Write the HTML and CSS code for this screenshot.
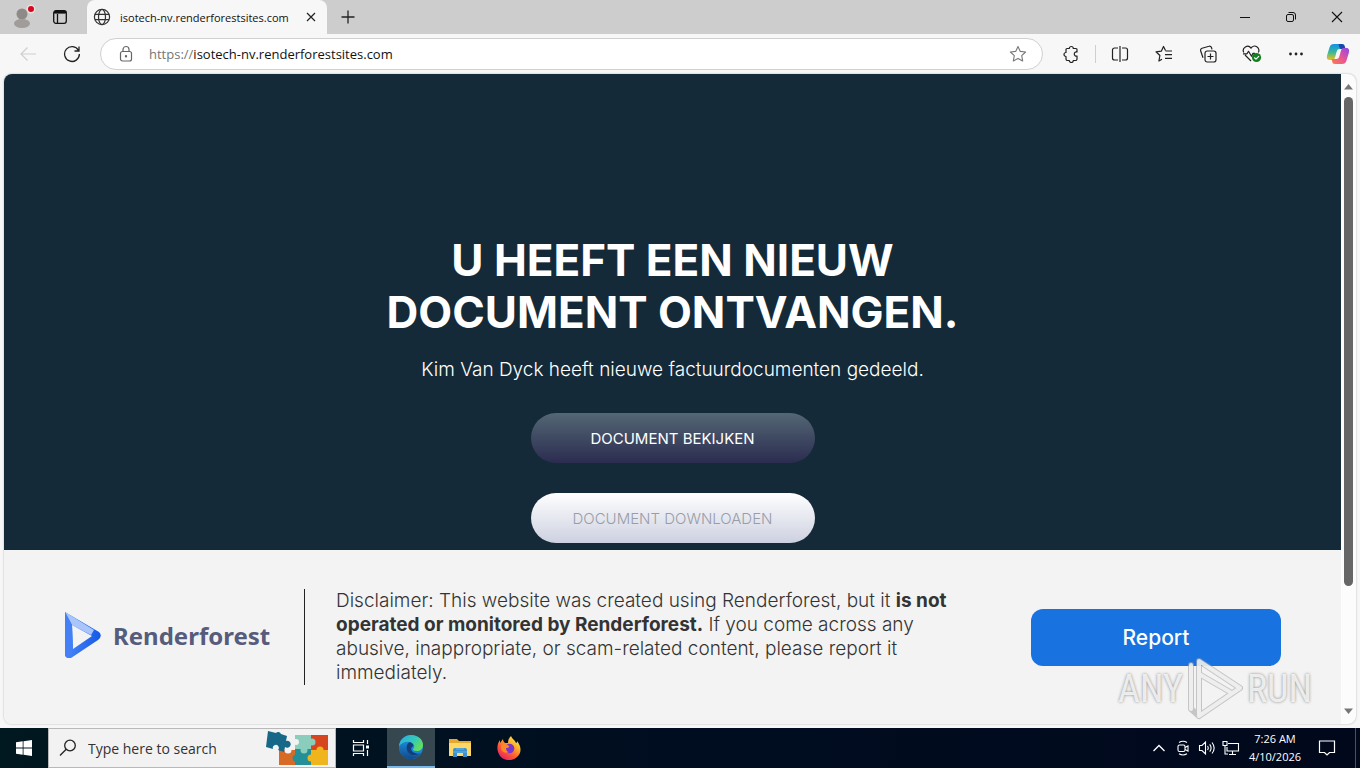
FILE: index.html
```html
<!DOCTYPE html>
<html lang="nl">
<head>
<meta charset="utf-8">
<title>isotech-nv.renderforestsites.com</title>
<link rel="stylesheet" href="styles.css">
</head>
<body>
<header class="tabstrip">
  <button class="tab-tool profile" aria-label="Profile">
    <svg width="30" height="30" viewBox="0 0 30 30"><circle cx="15" cy="12" r="5.500" fill="#8e8a87"/><ellipse cx="15" cy="21.500" rx="8" ry="4.500" fill="#a09c99"/><circle cx="24" cy="7" r="4.500" fill="#e6e0e0"/><circle cx="24" cy="7" r="3" fill="#d8061f"/></svg>
  </button>
  <button class="tab-tool" aria-label="Tab actions">
    <svg width="16" height="16" viewBox="0 0 16 16" fill="none" stroke="#111" stroke-width="1.300"><rect x="1.700" y="1.700" width="12.600" height="12.600" rx="2.200"/><path d="M2 3.500h12M5.500 5v9" /><path d="M2.500 3.200h11" stroke-width="2.600"/></svg>
  </button>
  <div class="tab">
    <svg width="18" height="18" viewBox="0 0 18 18" fill="none" stroke="#333" stroke-width="1.200"><circle cx="9" cy="9" r="7.600"/><ellipse cx="9" cy="9" rx="3.500" ry="7.600"/><path d="M2 6.300h14M2 11.700h14"/></svg>
    <span class="tab-title">isotech-nv.renderforestsites.com</span>
    <button class="tab-close" aria-label="Close tab"><svg width="12" height="12" viewBox="0 0 12 12" stroke="#222" stroke-width="1.200"><path d="M2 2l8 8M10 2l-8 8"/></svg></button>
  </div>
  <button class="new-tab" aria-label="New tab"><svg width="16" height="16" viewBox="0 0 16 16" stroke="#222" stroke-width="1.300"><path d="M8 1.500v13M1.500 8h13"/></svg></button>
  <div class="window-controls">
    <button aria-label="Minimize"><svg width="12" height="12" viewBox="0 0 12 12" stroke="#111"><path d="M1 6.500h10"/></svg></button>
    <button aria-label="Restore"><svg width="12" height="12" viewBox="0 0 12 12" fill="none" stroke="#111"><rect x="1.500" y="3.500" width="7" height="7" rx="1.500"/><path d="M3.500 1.500h4.500a2.500 2.500 0 0 1 2.500 2.500v4.500"/></svg></button>
    <button aria-label="Close"><svg width="12" height="12" viewBox="0 0 12 12" stroke="#111" stroke-width="1.100"><path d="M1 1l10 10M11 1L1 11"/></svg></button>
  </div>
</header>

<nav class="toolbar">
  <button class="tool" aria-label="Back"><svg width="18" height="18" viewBox="0 0 18 18" fill="none" stroke="#cfcfcf" stroke-width="1.200"><path d="M17 9H2M8.500 2.500L2 9l6.500 6.500"/></svg></button>
  <button class="tool" aria-label="Refresh"><svg width="18" height="18" viewBox="0 0 18 18" fill="none" stroke="#222" stroke-width="1.300"><path d="M15.500 5.500A7.400 7.400 0 1 0 16.400 9M16 1.500v4.500h-4.500"/></svg></button>
  <div class="address">
    <svg width="16" height="18" viewBox="0 0 16 18" fill="none" stroke="#666" stroke-width="1.200"><rect x="2.500" y="6.500" width="11" height="9.500" rx="2"/><path d="M5 6.500V4.500a3 3 0 0 1 6 0v2"/><circle cx="8" cy="11.300" r=".6" fill="#666"/></svg>
    <label class="scheme" for="url">https://</label>
    <input id="url" type="text" value="isotech-nv.renderforestsites.com">
    <button class="star" aria-label="Add to favorites"><svg width="18" height="18" viewBox="0 0 18 18" fill="none" stroke="#777" stroke-width="1.100" stroke-linejoin="round"><path d="M9 1.500l2.300 4.900 5.300.6-3.900 3.700 1 5.300L9 13.400 4.300 16l1-5.300L1.400 7l5.300-.6z"/></svg></button>
  </div>
  <button class="tool" aria-label="Extensions"><svg width="18" height="18" viewBox="0 0 18 18" fill="none" stroke="#222" stroke-width="1.200" stroke-linejoin="round"><path d="M5 3.500h2.300a2 2 0 1 1 4 0H14a1 1 0 0 1 1 1V7a2.100 2.100 0 1 0 0 4v3a1.500 1.500 0 0 1-1.500 1.500h-2.200a2 2 0 0 1-4 0H5.500A1.500 1.500 0 0 1 4 14v-2.500a2 2 0 0 1 0-4v-3a1 1 0 0 1 1-1z"/></svg></button>
  <span class="divider"></span>
  <button class="tool" aria-label="Split screen"><svg width="18" height="18" viewBox="0 0 18 18" fill="none" stroke="#222" stroke-width="1.200"><path d="M7 3H3.500A2 2 0 0 0 1.500 5v8a2 2 0 0 0 2 2H7M11 3h3.500a2 2 0 0 1 2 2v8a2 2 0 0 1-2 2H11M9 1v16"/></svg></button>
  <button class="tool" aria-label="Favorites"><svg width="18" height="18" viewBox="0 0 18 18" fill="none" stroke="#222" stroke-width="1.200" stroke-linejoin="round"><path d="M10.500 5.500L8.500 1.500 6.300 6.200 1 6.800l3.900 3.700-1 5.500L7 14.200M10.500 6H17M10 9.700h7M10 13.400h7"/></svg></button>
  <button class="tool" aria-label="Collections"><svg width="18" height="18" viewBox="0 0 18 18" fill="none" stroke="#222" stroke-width="1.200"><rect x="6" y="6" width="11" height="11" rx="2.200"/><path d="M11.500 8.500v6M8.500 11.500h6M4 12.800L1.700 6a2.200 2.200 0 0 1 1.400-2.800L10 1.300a2 2 0 0 1 2.600 1.500l.4 1.500"/></svg></button>
  <button class="tool" aria-label="Browser essentials"><svg width="20" height="18" viewBox="0 0 20 18" fill="none" stroke="#222" stroke-width="1.200" stroke-linejoin="round"><path d="M1.800 7.500A4.200 4.200 0 0 1 9 3.200a4.200 4.200 0 0 1 7.300 4.300M3 10l6 6M1 8.800h4l1.500-2.500 3 5 1.500-3h2"/><circle cx="14.500" cy="12.500" r="4.600" fill="#12801f" stroke="none"/><path d="M12.300 12.500l1.700 1.700 3-3" stroke="#fff"/></svg></button>
  <button class="tool" aria-label="Settings and more"><svg width="16" height="16" viewBox="0 0 16 16" fill="#222"><circle cx="2.500" cy="8" r="1.400"/><circle cx="8" cy="8" r="1.400"/><circle cx="13.500" cy="8" r="1.400"/></svg></button>
  <button class="tool copilot" aria-label="Copilot"><svg width="24" height="24" viewBox="0 0 24 24">
    <defs><linearGradient id="ca" x1="0" y1="0" x2="0" y2="1"><stop offset="0" stop-color="#168fe5"/><stop offset=".5" stop-color="#35b7a0"/><stop offset="1" stop-color="#f2c312"/></linearGradient><linearGradient id="cb" x1="1" y1="0" x2="0" y2="1"><stop offset="0" stop-color="#8c48ed"/><stop offset=".5" stop-color="#e65594"/><stop offset="1" stop-color="#ff7c4b"/></linearGradient></defs>
    <path d="M8 2h7c2 0 2.500 1 3 3l.5 2H14c-2 0-2.800.8-3.300 2.500L9 15.500C8.500 17 8 18 6 18H4c-3 0-3.600-2-2.800-5L3.500 5.500C4.200 3 5.500 2 8 2z" fill="url(#ca)"/>
    <path d="M12.500 2H16c2 0 2.500 1 3 3l.5 2H15c-1 0-1.500-1-2.500-5z" fill="#1748ae"/>
    <path d="M16 22H9c-2 0-2.500-1-3-3l-.5-2H10c2 0 2.800-.8 3.300-2.500L15 8.500C15.500 7 16 6 18 6h2c3 0 3.600 2 2.800 5l-2.300 7.500C19.800 21 18.500 22 16 22z" fill="url(#cb)"/></svg></button>
</nav>

<div class="viewport">
  <div class="site">
    <main class="hero">
      <h1>U HEEFT EEN NIEUW<br>DOCUMENT ONTVANGEN.</h1>
      <p>Kim Van Dyck heeft nieuwe factuurdocumenten gedeeld.</p>
      <button class="pill pill-dark">DOCUMENT BEKIJKEN</button>
      <button class="pill pill-light">DOCUMENT DOWNLOADEN</button>
    </main>
    <footer class="disclaimer">
      <div class="brand">
        <svg width="38" height="48" viewBox="0 0 38 48"><defs><linearGradient id="rf" x1="0" y1="0" x2="1" y2="0"><stop offset="0" stop-color="#4b86f7"/><stop offset="1" stop-color="#1559e6"/></linearGradient></defs><path d="M1 1v42q0 4 4 4h2L34 29q5-4 1-8z" fill="url(#rf)"/><path d="M1 1l29 18-3 5L8 14z" fill="#a9c5fb"/><path d="M8 14l20 11L9 38z" fill="#f3f3f3"/><path d="M1 1l7 13 1 24-4 9q-4 0-4-4z" fill="#4380f5"/></svg>
        <span>Renderforest</span>
      </div>
      <p class="notice">Disclaimer: This website was created using Renderforest, but it <strong>is not operated or monitored by Renderforest.</strong> If you come across any abusive, inappropriate, or scam-related content, please report it immediately.</p>
      <button class="report">Report</button>
    </footer>
  </div>
  <div class="scrollbar">
    <svg width="9" height="6" viewBox="0 0 9 6"><path d="M0 5.500h9L4.500 0z" fill="#777"/></svg>
    <div class="track"><div class="thumb"></div></div>
    <svg width="9" height="6" viewBox="0 0 9 6"><path d="M0 .5h9L4.500 6z" fill="#777"/></svg>
  </div>
</div>

<div class="watermark">
  <span>ANY</span>
  <svg width="58" height="64" viewBox="0 0 58 64" fill="none" stroke-linejoin="round" stroke-linecap="round"><path d="M13 4L54 31 13 59zM13 4v55M13 17l31 18M5 8v44l8 7" stroke="#a7a7a7" stroke-opacity=".6" stroke-width="6"/><path d="M13 4L54 31 13 59zM13 17l31 18M5 8v44" stroke="#f8f8f8" stroke-opacity=".8" stroke-width="4"/></svg>
  <span>RUN</span>
</div>

<footer class="taskbar">
  <button class="start" aria-label="Start"><svg width="16" height="16" viewBox="0 0 16 16" fill="#fff"><path d="M0 2.300L6.700 1.300v6.300H0zM7.500 1.200L16 0v7.600H7.500zM0 8.400h6.700v6.300L0 13.700zM7.500 8.400H16V16l-8.500-1.200z"/></svg></button>
  <div class="search">
    <svg width="18" height="18" viewBox="0 0 18 18" fill="none" stroke="#222" stroke-width="1.300"><circle cx="11" cy="6.500" r="5.300"/><path d="M7.200 10.300L1 16.500"/></svg>
    <input type="text" aria-label="Search" placeholder="Type here to search">
    <svg width="64" height="36" viewBox="0 0 64 36">
      <path d="M14 20h18v15H14z" fill="#d86a28"/><path d="M30 5h18v15H30z" fill="#8acdbd"/><path d="M46 5h17v16H46z" fill="#d6451d"/><path d="M30 19h18v16H30z" fill="#238f96"/><path d="M46 20h17v15H46z" fill="#f0b51d"/>
      <circle cx="47" cy="12" r="3.500" fill="#8acdbd"/><circle cx="39" cy="20" r="3.500" fill="#8acdbd"/><circle cx="55" cy="20" r="3.500" fill="#f0b51d"/><circle cx="46" cy="28" r="3.500" fill="#f0b51d"/><circle cx="31" cy="28" r="3.500" fill="#238f96"/><circle cx="23" cy="20" r="3.500" fill="#f2f2f2"/><circle cx="31" cy="12" r="3" fill="#f2f2f2"/>
      <path d="M3 1l8 2a3 3 0 0 1 5 1l6 2-1 5a3.500 3.500 0 1 1-1 6l-1 5-6-2a3 3 0 1 0-5-1l-7-2z" fill="#176888"/></svg>
  </div>
  <button class="app" aria-label="Task view"><svg width="18" height="16" viewBox="0 0 18 16" fill="none" stroke="#fff" stroke-width="1.200"><path d="M1.500 0v2.500h10V0M1.500 16v-2.500h10V16M1.500 5h10v6h-10zM15.500 0v4M15.500 10v6"/><path d="M14 5.500h3v3h-3z" fill="#fff" stroke="none"/></svg></button>
  <button class="app active" aria-label="Microsoft Edge"><svg width="24" height="24" viewBox="0 0 24 24"><defs><linearGradient id="ea" x1="0" y1="0" x2="1" y2=".6"><stop offset="0" stop-color="#29a9e6"/><stop offset=".6" stop-color="#35c9b8"/><stop offset="1" stop-color="#65de58"/></linearGradient><linearGradient id="eb" x1="0" y1="0" x2="0" y2="1"><stop offset="0" stop-color="#1c86d3"/><stop offset="1" stop-color="#114a8b"/></linearGradient></defs><circle cx="12" cy="12" r="12" fill="#1b85d6"/><path d="M0 11C1 4 6 0 12 0c8 0 12 5.500 12 10 0 4-3 6-6 6-3 0-4.500-1-4-2 1-1 1.500-2 1-4-1-2-3.500-3-6-3-4 0-7 2-9 4z" fill="url(#ea)"/><path d="M8 11c-1 6 4 11 10 9 2-.5 3-1 4.500-2.500C20 22 16 24 12 24 4 24 0 18 0 12c2-4 7-6 11-5-2 1-2.800 2-3 4z" fill="url(#eb)"/><path d="M11 7c-3 1-4 5-3 8 1 4 5 6 9 5 3-.5 4-1 6-3-1 2-5 2-7 1-3-1-5-4-3-6 2-1 2-3-2-5z" fill="#123f7b"/></svg></button>
  <button class="app" aria-label="File Explorer"><svg width="22" height="20" viewBox="0 0 22 20"><path d="M0 1h8l2 2h12v15H0z" fill="#e6a82d"/><path d="M0 5h22v13H0z" fill="#ffd766"/><path d="M4 19v-7q0-2 2-2h10q2 0 2 2v7h-4v-4H8v4z" fill="#3b91cf"/><path d="M4 14h14M7 11h8" stroke="#64b5e7" stroke-width="1"/></svg></button>
  <button class="app" aria-label="Firefox"><svg width="24" height="24" viewBox="0 0 24 24"><defs><linearGradient id="ff" x1=".9" y1="0" x2=".2" y2="1"><stop offset="0" stop-color="#fff04b"/><stop offset=".35" stop-color="#ffb02a"/><stop offset=".65" stop-color="#ff5a36"/><stop offset="1" stop-color="#e51968"/></linearGradient></defs><path d="M14 0c1 3 4 4 5 7 1 0 1-1 1-2 5 6 4 12 1 15-5 6-14 5-18 0C-1 14 0 8 3 4v3l3-4c0 2 1 3 2 4l3 0c0-3 1-5 3-7z" fill="url(#ff)"/><circle cx="12.500" cy="12.500" r="4.800" fill="#7a35d0"/><path d="M4 9c3-2 6-1 8 1 1 1-1 2-3 2 0 2 1 4 3 4-3 2-7 0-8-3z" fill="#ff8a25"/></svg></button>
  <div class="tray">
    <button aria-label="Show hidden icons"><svg width="14" height="14" viewBox="0 0 14 14" fill="none" stroke="#fff" stroke-width="1.300"><path d="M1.500 10L7 4.500 12.500 10"/></svg></button>
    <button aria-label="Meet now"><svg width="14" height="16" viewBox="0 0 14 16" fill="none" stroke="#fff" stroke-width="1.100"><rect x="2" y="5" width="7" height="6.500" rx="1.500"/><path d="M9 7.500l3-1.500v5L9 9.500M3 2.500q4-2.500 8 0M3 13.800q4 2.500 8 0"/></svg></button>
    <button aria-label="Volume"><svg width="18" height="16" viewBox="0 0 18 16" fill="none" stroke="#fff" stroke-width="1.100"><path d="M1.500 5.500h2.500l3.500-3.500v12L4 10.500H1.500zM9.500 6q1.500 2 0 4M11.700 4.300q2.800 3.700 0 7.400M14 2.500q4.300 5.500 0 11"/></svg></button>
    <button aria-label="Network"><svg width="18" height="16" viewBox="0 0 18 16" fill="none" stroke="#fff" stroke-width="1.100"><path d="M6 3.500h10.500v7.500H5V7M10.500 11v3M7 14.500h7M1 1.500h4v4H1zM3 5.500v8.500h3"/></svg></button>
    <button class="clock"><span>7:26 AM</span><span>4/10/2026</span></button>
    <button class="notify" aria-label="Notifications"><svg width="18" height="18" viewBox="0 0 18 18" fill="none" stroke="#fff" stroke-width="1.200"><path d="M1.500 2h15v11.500h-5L9 16l-2.500-2.500h-5z"/></svg></button>
    <button class="show-desktop" aria-label="Show desktop"></button>
  </div>
</footer>
</body>
</html>
```
FILE: styles.css
```css
* { box-sizing: border-box; }
html, body { height: 100%; }
body {
  margin: 0;
  display: flex;
  flex-direction: column;
  overflow: hidden;
  background: #f7f7f7;
  font-family: "Open Sans", "Noto Sans", sans-serif;
  font-size: 11px;
  color: #111;
}
button {
  border: 0;
  padding: 0;
  background: none;
  color: inherit;
  font: inherit;
  display: flex;
  align-items: center;
  justify-content: center;
}
input {
  border: 0;
  padding: 0;
  outline: 0;
  background: none;
  color: inherit;
  font: inherit;
  min-width: 0;
  flex: 1;
}
svg { flex: none; display: block; }

/* Tab strip */
.tabstrip {
  display: flex;
  height: 34px;
  flex: none;
  background: #cdcdcd;
}
.tab-tool { width: 32px; }
.profile { width: 44px; }
.tab {
  display: flex;
  align-items: center;
  gap: 9px;
  width: 240px;
  margin-left: 11px;
  padding: 0 8px 0 6px;
  border-radius: 8px 8px 0 0;
  background: #f7f7f7;
}
.tab-title { flex: 1; white-space: nowrap; }
.tab-close { width: 16px; height: 16px; }
.new-tab { width: 42px; }
.window-controls { display: flex; margin-left: auto; }
.window-controls button { width: 46px; }

/* Toolbar */
.toolbar {
  display: flex;
  align-items: center;
  height: 40px;
  flex: none;
  padding: 0 2px 0 6px;
}
.tool { width: 44px; height: 32px; }
.copilot { width: 40px; }
.address {
  flex: 1;
  display: flex;
  align-items: center;
  height: 32px;
  margin: 0 6px;
  padding: 0 15px 0 17px;
  border: 1px solid #d0d0d0;
  border-radius: 16px;
  background: #fff;
  font-size: 13px;
}
.scheme { margin-left: 15px; color: #767676; }
.divider { width: 1px; height: 18px; margin: 0 2px; background: #cfcfcf; }

/* Web page */
.viewport {
  flex: 1;
  min-height: 0;
  display: flex;
  margin: 0 4px 4px;
  overflow: hidden;
  border-radius: 8px;
  box-shadow: 0 0 2px #aaa;
  background: #fcfcfc;
}
.site {
  flex: 1;
  display: flex;
  flex-direction: column;
  font-family: Inter, sans-serif;
}
.hero {
  flex: 1;
  min-height: 0;
  overflow: hidden;
  display: flex;
  flex-direction: column;
  align-items: center;
  padding-top: 160px;
  background: #142a38;
  color: #fff;
  text-align: center;
}
.hero h1 {
  margin: 0;
  font-size: 44px;
  line-height: 52px;
  font-weight: 700;
}
.hero p {
  margin: 18px 0 30px;
  font-size: 19px;
  line-height: 27px;
  font-weight: 300;
}
.pill {
  flex: none;
  width: 284px;
  height: 50px;
  margin-bottom: 30px;
  border-radius: 25px;
  font-size: 15px;
}
.pill-dark { background: linear-gradient(#536774, #2b2c50); }
.pill-light { background: linear-gradient(#fff, #cdd0e0); color: #989da8; font-weight: 300; }

.disclaimer {
  display: flex;
  align-items: center;
  padding: 39px 60px;
  background: #f3f3f3;
}
.brand {
  display: flex;
  align-items: center;
  gap: 11px;
  width: 208px;
  padding-bottom: 4px;
  font-family: "Noto Sans", sans-serif;
  font-size: 24px;
  font-weight: 700;
  color: #565c7c;
}
.notice {
  flex: 0 1 670px;
  margin: 0 0 0 32px;
  padding: 0 18px 0 31px;
  border-left: 1px solid #222;
  color: #333;
  font-size: 19px;
  line-height: 24px;
  font-weight: 300;
}
.notice strong { font-weight: 700; }
.report {
  width: 250px;
  height: 57px;
  margin-left: auto;
  border-radius: 12px;
  background: #1873e0;
  color: #fff;
  font-size: 21px;
  font-weight: 500;
}
.scrollbar {
  display: flex;
  flex-direction: column;
  align-items: center;
  gap: 7px;
  width: 15px;
  padding: 10px 0;
}
.track { flex: 1; width: 9px; }
.thumb { height: 81%; border-radius: 5px; background: #666; }

/* Overlay mark */
.watermark {
  position: absolute;
  right: 48px;
  bottom: 47px;
  display: flex;
  align-items: center;
  gap: 3px;
  font-family: "Roboto Condensed", "Liberation Sans Narrow", Roboto, sans-serif;
  font-size: 38px;
  color: rgba(250, 250, 250, .85);
  text-shadow: 0 0 3px #888;
  pointer-events: none;
}

/* Taskbar */
.taskbar {
  display: flex;
  height: 40px;
  flex: none;
  gap: 1px;
  background: linear-gradient(90deg, #001820, #000d20 50%, #01081c);
  color: #fff;
}
.start { width: 48px; margin-right: -1px; }
.search {
  display: flex;
  align-items: center;
  width: 288px;
  padding: 0 6px 0 10px;
  gap: 11px;
  border: 1px solid #b8b8b8;
  background: #f2f2f2;
  color: #333;
  font-size: 14px;
}
.search input::placeholder { color: #333; opacity: 1; }
.app { width: 48px; }
.active { margin-left: 1px; background: #36474f; border-bottom: 2px solid #76b9ed; }
.tray { display: flex; margin-left: auto; }
.tray button { width: 24px; }
.tray .clock {
  width: 64px;
  flex-direction: column;
  line-height: 18px;
}
.tray .notify { width: 40px; margin-right: 8px; }
.tray .show-desktop { width: 5px; border-left: 1px solid #4c5260; }
```
